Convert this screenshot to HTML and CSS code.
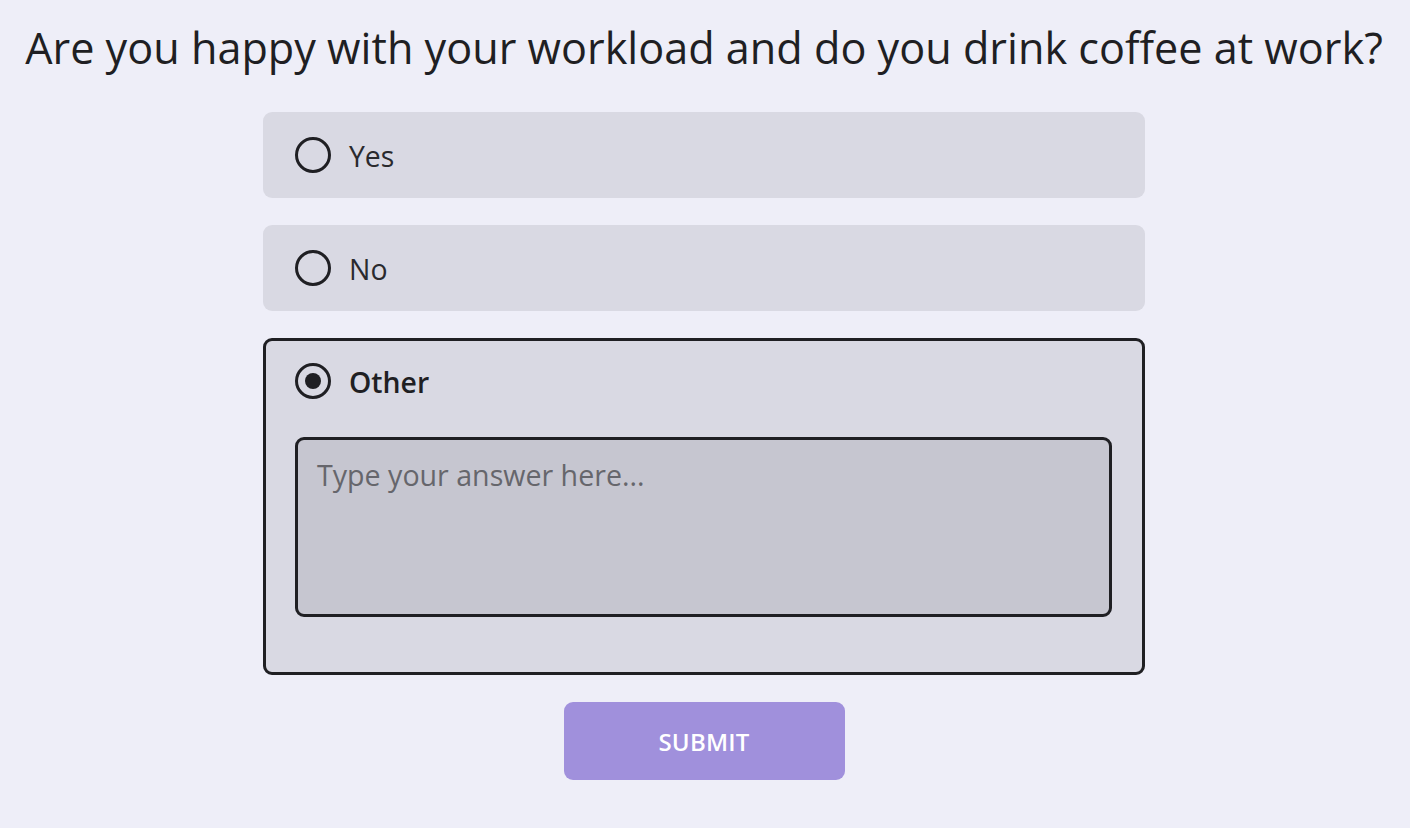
FILE: index.html
```html
<!DOCTYPE html>
<html>
<head>
<meta charset="utf-8">
<link rel="stylesheet" href="styles.css">
</head>
<body>
<main class="page">
  <h1 class="question">Are you happy with your workload and do you drink coffee at work?</h1>
  <form class="options">
    <label class="option">
      <span class="radio"></span>
      <span class="label-text">Yes</span>
    </label>
    <label class="option">
      <span class="radio"></span>
      <span class="label-text">No</span>
    </label>
    <div class="option option-selected">
      <div class="option-row">
        <span class="radio radio-checked"></span>
        <span class="label-text label-bold">Other</span>
      </div>
      <textarea class="answer" placeholder="Type your answer here..."></textarea>
    </div>
    <button type="button" class="submit">SUBMIT</button>
  </form>
</main>
</body>
</html>
```
FILE: styles.css
```css
* { box-sizing: border-box; }
body {
  margin: 0;
  background: #eeeef8;
  font-family: "Open Sans", "Noto Sans", sans-serif;
  color: #1f1f23;
}
.page {
  display: flex;
  flex-direction: column;
  align-items: center;
  padding-right: 2px;
}
.question {
  margin: 20px 0 0;
  font-size: 43.2px;
  font-weight: 400;
  line-height: 56px;
  white-space: nowrap;
}
.options {
  width: 882px;
  margin-top: 36px;
  display: flex;
  flex-direction: column;
  gap: 27px;
}
.option {
  display: flex;
  align-items: center;
  gap: 18px;
  background: #d9d9e3;
  border: 3px solid transparent;
  border-radius: 9px;
  padding: 22px 29px;
  height: 86px;
}
.option .label-text { padding-top: 2px; }
.option-selected {
  display: flex;
  flex-direction: column;
  align-items: stretch;
  height: 337px;
  border-color: #1f1f23;
  padding: 21px 29px 56px;
  gap: 37px;
}
.option-row {
  display: flex;
  align-items: center;
  gap: 18px;
}
.radio {
  flex: none;
  width: 36px;
  height: 36px;
  border: 3px solid #1f1f23;
  border-radius: 50%;
  display: flex;
  align-items: center;
  justify-content: center;
}
.radio-checked::after {
  content: "";
  width: 16px;
  height: 16px;
  border-radius: 50%;
  background: #1f1f23;
}
.label-text {
  font-size: 28.4px;
  line-height: 36px;
  color: #2a2a2e;
}
.label-bold {
  font-weight: 600;
  color: #1f1f23;
}
.answer {
  display: block;
  flex: none;
  width: 817px;
  height: 180px;
  resize: none;
  background: #c6c6d0;
  border: 3px solid #1f1f23;
  border-radius: 9px;
  padding: 17px 19px;
  font-family: "Open Sans", "Noto Sans", sans-serif;
  font-size: 28.6px;
  line-height: 36px;
  color: #1f1f23;
  outline: none;
}
.answer::placeholder { color: #66666c; }
.submit {
  align-self: center;
  width: 281px;
  height: 78px;
  border: none;
  border-radius: 9px;
  background: #a090dc;
  color: #ffffff;
  font-family: "Open Sans", "Noto Sans", sans-serif;
  font-size: 24px;
  font-weight: 600;
  letter-spacing: 0.2px;
}
```
